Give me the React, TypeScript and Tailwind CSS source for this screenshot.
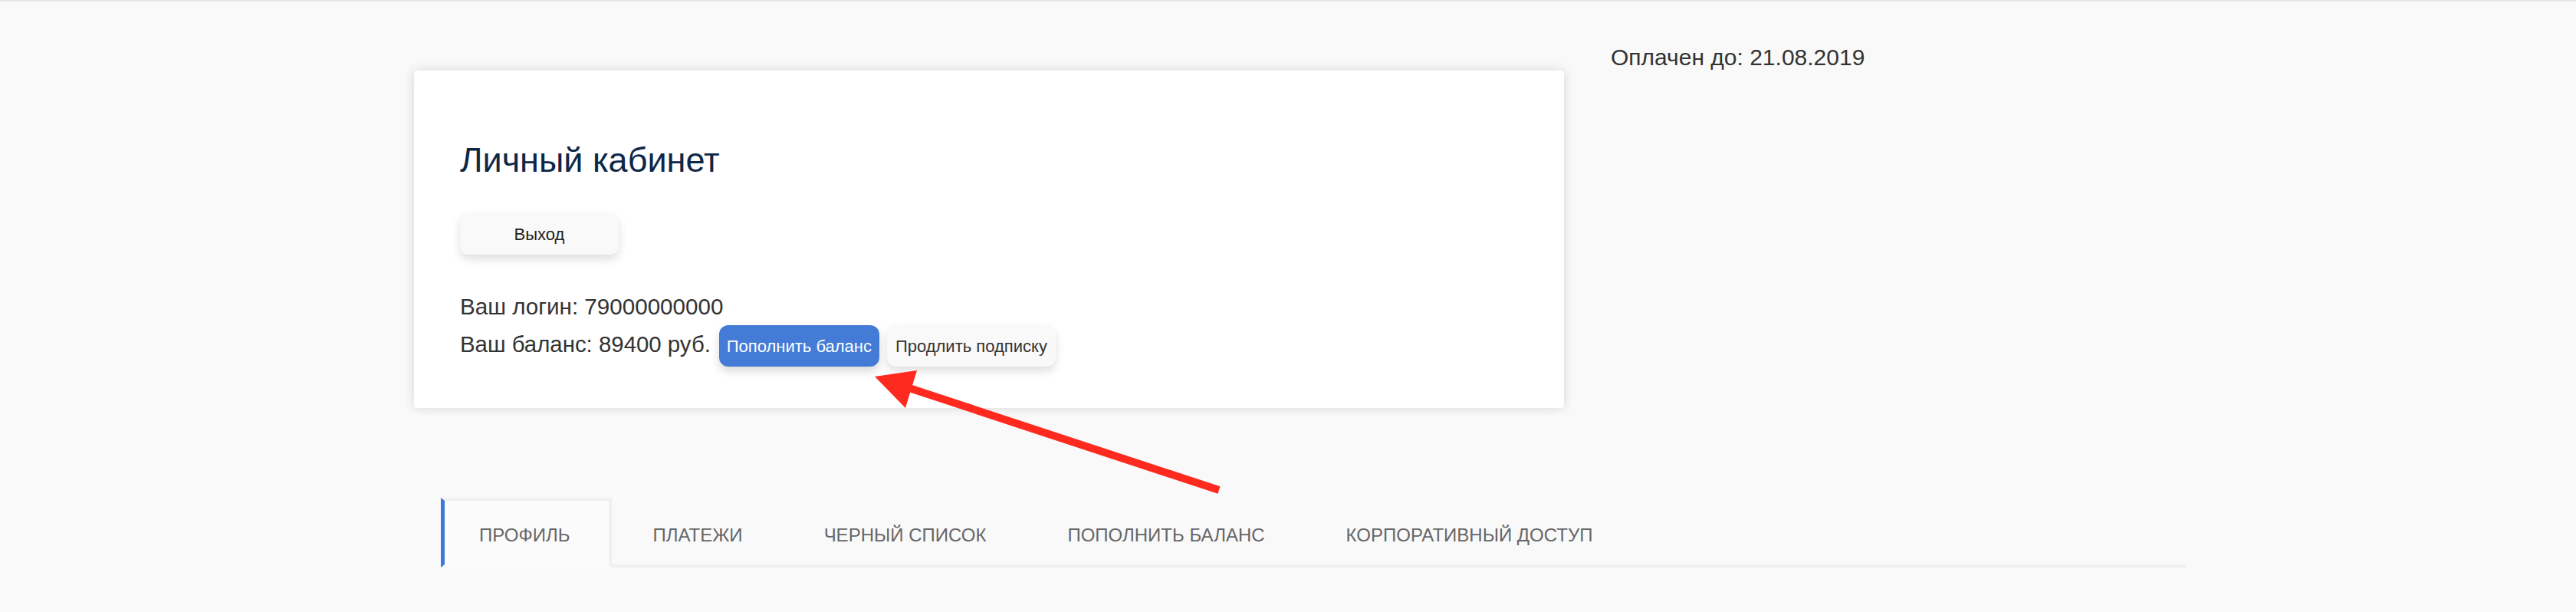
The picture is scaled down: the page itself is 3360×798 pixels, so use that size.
import React from "react";

const font = { fontFamily: '"Liberation Sans", Arial, sans-serif' };

function Tab({ label, active }: { label: string; active?: boolean }) {
  if (active) {
    return (
      <div className="border-t-4 border-r-4 border-l-[5px] border-b-4 border-t-[#f0f0f0] border-r-[#f0f0f0] border-l-[#3f79d8] border-b-transparent bg-[#fbfbfb] pl-[45px] pr-[51px] pt-[6px] text-[24px] leading-[77px] text-[#666]">
        {label}
      </div>
    );
  }
  return (
    <div className="border-t-4 border-b-4 border-t-transparent border-b-[#f0f0f0] px-[53px] pt-[6px] text-[24px] leading-[77px] text-[#666]">
      {label}
    </div>
  );
}

export default function App() {
  return (
    <div
      className="relative min-h-screen w-full border-t-2 border-[#e6e6e6] bg-[#f9f9f9] pt-[53px]"
      style={font}
    >
      <div className="flex items-start">
        <div className="ml-[540px] mt-[37px] w-[1500px] rounded-[4px] bg-white pl-[60px] pt-[94px] pb-[54px] shadow-[0_0_14px_rgba(0,0,0,0.14)]">
          <div className="text-[45px] leading-[45px] text-[#0d2747]">Личный кабинет</div>
          <button className="mt-[47px] flex h-[54px] w-[207px] items-center justify-center rounded-[10px] bg-[#f9f9f9] text-[22px] text-[#222] shadow-[0_6px_12px_rgba(0,0,0,0.13)]">
            Выход
          </button>
          <div className="mt-[48px] text-[29.6px] leading-[40px] text-[#333]">Ваш логин: 79000000000</div>
          <div className="mt-[4px] flex items-start">
            <div className="mt-[5px] text-[29.4px] leading-[40px] text-[#333]">Ваш баланс: 89400 руб.</div>
            <button className="ml-[11px] flex h-[54px] w-[209px] items-center justify-center rounded-[12px] bg-[#437bd7] text-[22px] text-white shadow-[0_6px_12px_rgba(0,0,0,0.15)]">
              Пополнить баланс
            </button>
            <button className="ml-[10px] flex h-[54px] w-[220px] items-center justify-center rounded-[12px] bg-[#f9f9f9] text-[22px] text-[#333] shadow-[0_6px_12px_rgba(0,0,0,0.13)]">
              Продлить подписку
            </button>
          </div>
        </div>
        <div className="ml-[61px] text-[30px] leading-[40px] text-[#333]">Оплачен до: 21.08.2019</div>
      </div>

      <div className="ml-[575px] mt-[117px] flex w-[2277px] items-stretch">
        <Tab label="ПРОФИЛЬ" active />
        <Tab label="ПЛАТЕЖИ" />
        <Tab label="ЧЕРНЫЙ СПИСОК" />
        <Tab label="ПОПОЛНИТЬ БАЛАНС" />
        <Tab label="КОРПОРАТИВНЫЙ ДОСТУП" />
        <div className="flex-1 border-b-4 border-b-[#f0f0f0]" />
      </div>

      <svg
        className="pointer-events-none absolute left-0 top-0"
        width="3360"
        height="798"
        viewBox="0 0 3360 798"
      >
        <line x1="1590" y1="637" x2="1186" y2="504" stroke="#ff2a1f" strokeWidth="10" />
        <polygon points="1141,489 1196,481 1181,530" fill="#ff2a1f" />
      </svg>
    </div>
  );
}
